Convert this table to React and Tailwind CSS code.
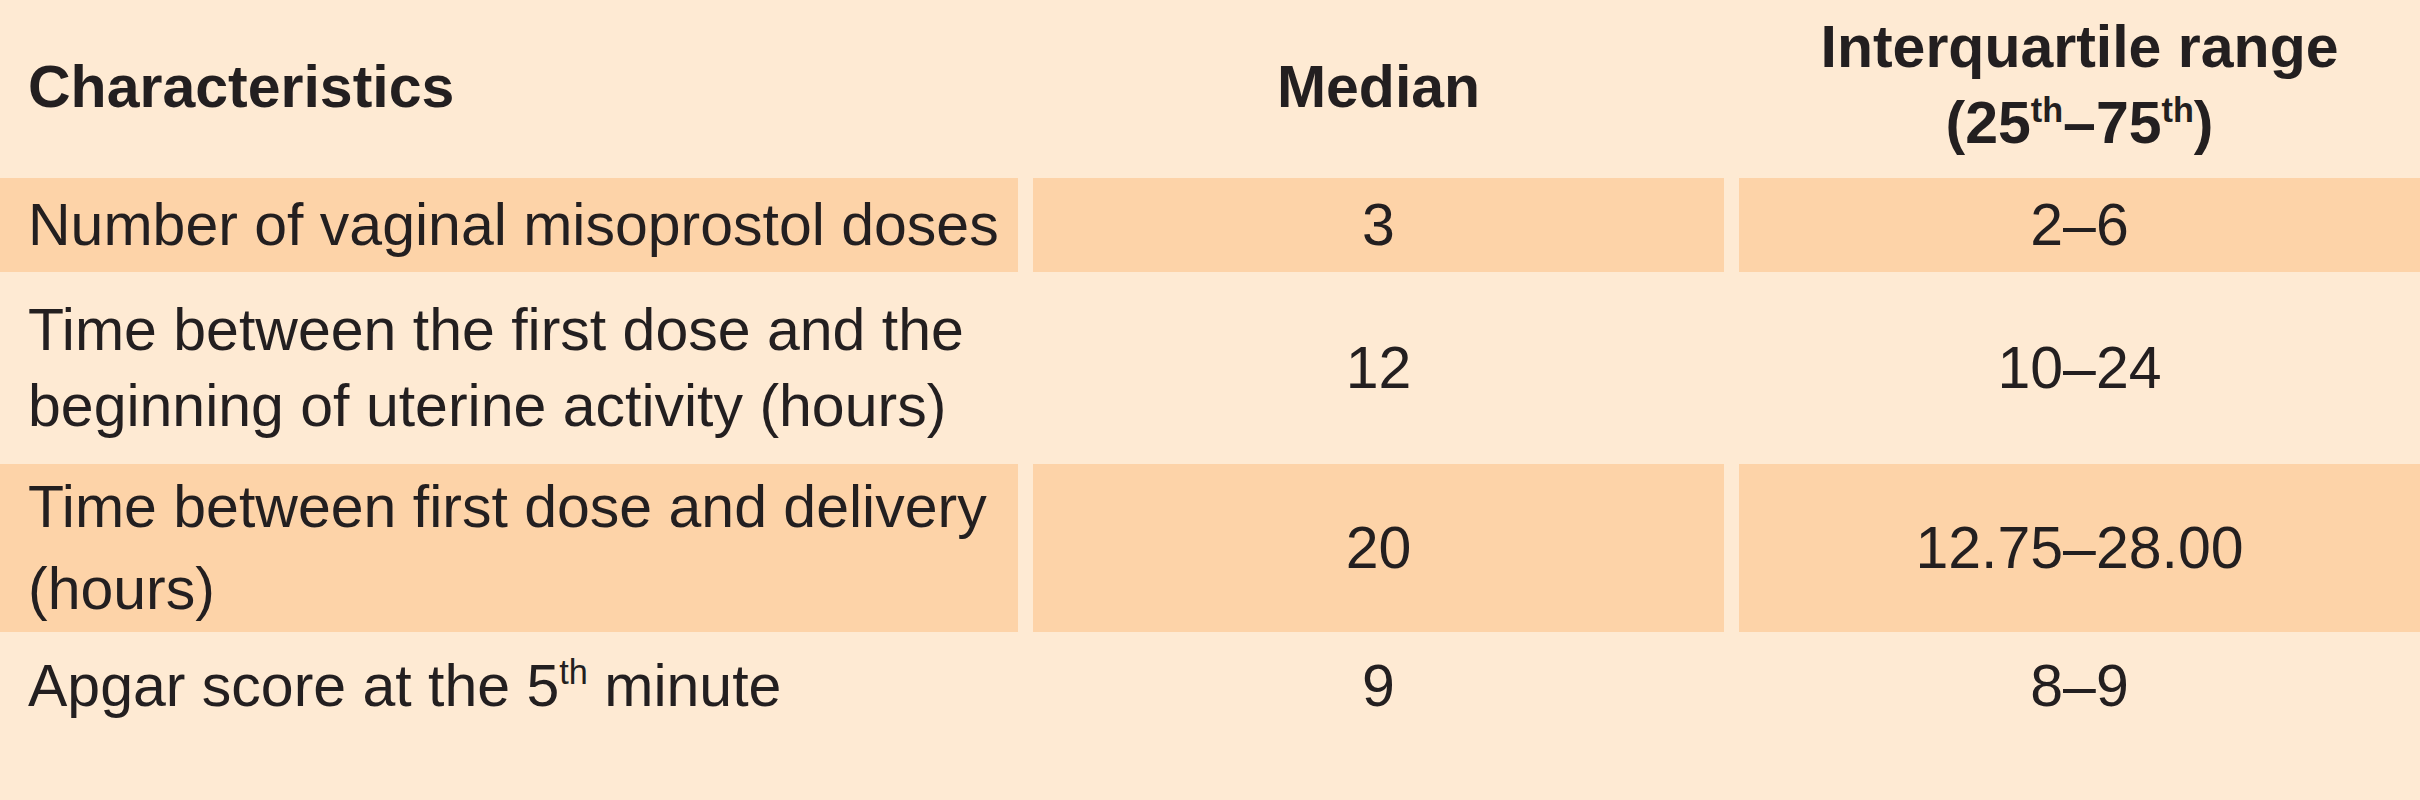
import React from "react";

// Table rows: dark rows get the peach cell fill, light rows sit on the page colour
const rows = [
  {
    label: <>Number of vaginal misoprostol doses</>,
    median: "3",
    iqr: "2–6",
    dark: true,
    height: "h-[94px]",
    leading: "leading-[79px]",
  },
  {
    label: (
      <>
        Time between the first dose and the
        <br />
        beginning of uterine activity (hours)
      </>
    ),
    median: "12",
    iqr: "10–24",
    dark: false,
    height: "h-[192px]",
    leading: "leading-[76px]",
  },
  {
    label: (
      <>
        Time between first dose and delivery
        <br />
        (hours)
      </>
    ),
    median: "20",
    iqr: "12.75–28.00",
    dark: true,
    height: "h-[168px]",
    leading: "leading-[82px]",
  },
  {
    label: (
      <>
        Apgar score at the 5<sup className="text-[0.58em] -top-[0.62em]">th</sup> minute
      </>
    ),
    median: "9",
    iqr: "8–9",
    dark: false,
    height: "h-[108px]",
    leading: "leading-[79px]",
  },
];

function Cell({ children, dark, left }) {
  return (
    <div
      className={`flex items-center ${left ? "justify-start pl-[28px]" : "justify-center text-center"} ${
        dark ? "bg-[#fdd3a8]" : ""
      }`}
    >
      <div className="whitespace-nowrap">{children}</div>
    </div>
  );
}

export default function App() {
  return (
    <div className="w-full min-h-[800px] bg-[#feead3] text-[#231f20] font-['Liberation_Sans',Arial,sans-serif] text-[59px] leading-[79px]">
      {/* Header */}
      <div className="grid grid-cols-[1018px_691px_1fr] gap-x-[15px] h-[178px] font-bold">
        <div className="flex items-center pl-[28px] pb-[4px]">Characteristics</div>
        <div className="flex items-center justify-center pb-[4px]">Median</div>
        <div className="flex flex-col items-center justify-center leading-[76px] text-center pb-[8px]">
          <div>Interquartile range</div>
          <div>
            (25<sup className="text-[0.58em] -top-[0.62em]">th</sup>–75
            <sup className="text-[0.58em] -top-[0.62em]">th</sup>)
          </div>
        </div>
      </div>

      {/* Body rows */}
      {rows.map((row, i) => (
        <div
          key={i}
          className={`grid grid-cols-[1018px_691px_1fr] gap-x-[15px] ${row.height} ${row.leading}`}
        >
          <Cell dark={row.dark} left>
            {row.label}
          </Cell>
          <Cell dark={row.dark}>{row.median}</Cell>
          <Cell dark={row.dark}>{row.iqr}</Cell>
        </div>
      ))}
    </div>
  );
}
